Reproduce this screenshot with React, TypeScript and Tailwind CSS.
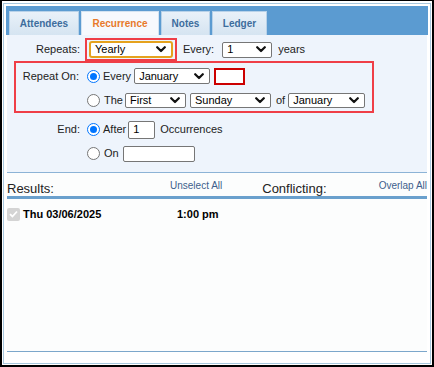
import React from 'react';

/** Recurrence tab of an appointment editor */

const Chevron = () => (
  <svg width="10" height="7" viewBox="0 0 10 7" className="shrink-0">
    <path d="M1.2 1.2 L5 5 L8.8 1.2" fill="none" stroke="#111" strokeWidth="2.2" strokeLinecap="round" strokeLinejoin="round" />
  </svg>
);

const Select: React.FC<{ value: string; className: string }> = ({ value, className }) => (
  <div className={`flex items-center justify-between bg-white pl-[4px] pr-[5px] text-[11px] text-black ${className}`}>
    <span className="leading-none">{value}</span>
    <Chevron />
  </div>
);

const Radio: React.FC<{ checked?: boolean }> = ({ checked }) =>
  checked ? (
    <div className="w-[13px] h-[13px] shrink-0 rounded-full border-[1.5px] border-[#0075ff] bg-white flex items-center justify-center">
      <div className="w-[7px] h-[7px] rounded-full bg-[#0075ff]" />
    </div>
  ) : (
    <div className="w-[13px] h-[13px] shrink-0 rounded-full border border-[#767676] bg-white" />
  );

const tabs = [
  { label: 'Attendees', w: 'w-[70px]' },
  { label: 'Recurrence', w: 'w-[78px]', active: true },
  { label: 'Notes', w: 'w-[49px]' },
  { label: 'Ledger', w: 'w-[55px]' },
];

const box = 'border border-[#767676] rounded-[2px]';

export default function App() {
  return (
    <div className="w-[434px] h-[367px] bg-white border-black border-t border-x-2 border-b-2 pt-[2px] px-px pb-px font-['Liberation_Sans',Arial,sans-serif] text-[11px] text-[#222]">
      <div className="h-full border border-[#a8c8de] pt-[2px] px-[2px] flex flex-col">
        {/* tab strip */}
        <div className="h-[29px] bg-[#5b9bd1] pt-[5px] pl-[3px] flex gap-[2px]">
          {tabs.map((t) => (
            <div
              key={t.label}
              className={`${t.w} h-[24px] flex items-center justify-center border border-b-0 text-[10px] font-bold ${
                t.active
                  ? 'bg-[#f6f9fd] border-[#d3e3f1] text-[#e8792b]'
                  : 'bg-linear-to-b from-[#e9f1f9] to-[#d5e4f1] border-[#b8d2e9] text-[#3d6d9d]'
              }`}
            >
              {t.label}
            </div>
          ))}
        </div>

        {/* form */}
        <div className="mx-px h-[138px] bg-[#eef4fc] border-b border-[#8cb3d6] pt-[3px]">
          <div className="flex items-center">
            <div className="w-[73px] text-right">Repeats:</div>
            <div className="ml-[5px] border-2 border-[#ef3e47] px-[2px] py-px">
              <Select value="Yearly" className="w-[84px] h-[17px] border-2 border-[#e5a21d] rounded-[3px] pl-[2px]" />
            </div>
            <div className="ml-[6px]">Every:</div>
            <Select value="1" className={`ml-[8px] w-[50px] h-[16px] ${box}`} />
            <div className="ml-[6px]">years</div>
          </div>

          <div className="ml-[7px] w-[360px] h-[52px] border-2 border-[#ef3e47] pt-[4px] flex flex-col gap-[6px]">
            <div className="flex items-center h-[18px]">
              <div className="w-[63px] text-right">Repeat On:</div>
              <div className="ml-[8px]">
                <Radio checked />
              </div>
              <div className="ml-[3px]">Every</div>
              <Select value="January" className={`ml-[3px] w-[76px] h-[16px] ${box}`} />
              <div className="ml-[4px] w-[31px] h-[17px] border-2 border-[#cc0000] bg-white" />
            </div>
            <div className="flex items-center h-[18px]">
              <div className="w-[63px]" />
              <div className="ml-[8px]">
                <Radio />
              </div>
              <div className="ml-[4px]">The</div>
              <Select value="First" className={`ml-[2px] w-[61px] h-[15px] ${box}`} />
              <Select value="Sunday" className={`ml-[4px] w-[81px] h-[15px] ${box}`} />
              <div className="ml-[5px]">of</div>
              <Select value="January" className={`ml-[3px] w-[77px] h-[15px] ${box}`} />
            </div>
          </div>

          <div className="mt-[7px] flex items-center h-[19px]">
            <div className="w-[73px] text-right">End:</div>
            <div className="ml-[7px]">
              <Radio checked />
            </div>
            <div className="ml-[3px]">After</div>
            <div className={`ml-[2px] w-[27px] h-[18px] bg-white ${box} flex items-center pl-[4px] text-black`}>1</div>
            <div className="ml-[5px]">Occurrences</div>
          </div>
          <div className="mt-[6px] flex items-center h-[17px]">
            <div className="w-[73px]" />
            <div className="ml-[7px]">
              <Radio />
            </div>
            <div className="ml-[4px]">On</div>
            <div className={`ml-[4px] w-[72px] h-[16px] bg-white ${box}`} />
          </div>
        </div>

        {/* results */}
        <div className="mx-px h-[179px] bg-[#fcfdfd] border-b border-[#7ca7cb]">
          <div className="h-[26px] flex items-start border-b-[3px] border-[#6aa0cd]">
            <div className="mt-[8px] w-[163px] text-[13px] leading-[15px] text-[#222]">Results:</div>
            <div className="mt-[7px] text-[10px] leading-[12px] text-[#3e5f8c]">Unselect All</div>
            <div className="mt-[8px] ml-[40px] text-[13px] leading-[15px] text-[#222]">Conflicting:</div>
            <div className="mt-[7px] ml-auto text-[10px] leading-[12px] text-[#3e5f8c]">Overlap All</div>
          </div>
          <div className="mt-[8px] flex items-center h-[14px]">
            <div className="w-[13px] h-[13px] rounded-[2px] bg-[#d4d4d4] flex items-center justify-center">
              <svg width="9" height="8" viewBox="0 0 9 8">
                <path d="M1 4.2 L3.4 6.5 L8 1.5" fill="none" stroke="#fff" strokeWidth="1.8" />
              </svg>
            </div>
            <div className="ml-[3px] w-[154px] font-bold text-[11px] text-black">Thu 03/06/2025</div>
            <div className="font-bold text-[11px] text-black">1:00 pm</div>
          </div>
        </div>
      </div>
    </div>
  );
}
